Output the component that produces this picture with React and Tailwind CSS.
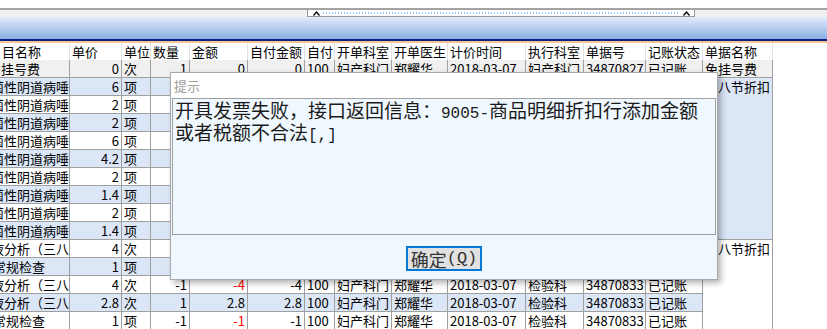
import React from "react";

const COLS = "grid-cols-[70px_52px_29px_39px_58px_57px_30px_57px_56px_78px_58px_62px_57px_70px]";

const headers = ["目名称", "单价", "单位", "数量", "金额", "自付金额", "自付", "开单科室", "开单医生", "计价时间", "执行科室", "单据号", "记账状态", "单据名称"];

const base = { pct: "100", dept: "妇产科门", doc: "郑耀华", time: "2018-03-07", st: "已记账" };

const A = "ml-[-11px]";
const rows = [
  { ...base, name: "挂号费", off: "ml-[-1px]", price: "0", unit: "次", qty: "1", amt: "0", self: "0", exec: "妇产科门", no: "34870827" },
  { ...base, name: "菌性阴道病唾液", off: A, price: "6", unit: "项", qty: "1", amt: "6", self: "6", exec: "检验科", no: "34870833" },
  { ...base, name: "菌性阴道病唾液", off: A, price: "2", unit: "项", qty: "1", amt: "2", self: "2", exec: "检验科", no: "34870833" },
  { ...base, name: "菌性阴道病唾液", off: A, price: "2", unit: "项", qty: "1", amt: "2", self: "2", exec: "检验科", no: "34870833" },
  { ...base, name: "菌性阴道病唾液", off: A, price: "6", unit: "项", qty: "1", amt: "6", self: "6", exec: "检验科", no: "34870833" },
  { ...base, name: "菌性阴道病唾液", off: A, price: "4.2", unit: "项", qty: "1", amt: "4.2", self: "4.2", exec: "检验科", no: "34870833" },
  { ...base, name: "菌性阴道病唾液", off: A, price: "2", unit: "项", qty: "1", amt: "2", self: "2", exec: "检验科", no: "34870833" },
  { ...base, name: "菌性阴道病唾液", off: A, price: "1.4", unit: "项", qty: "1", amt: "1.4", self: "1.4", exec: "检验科", no: "34870833" },
  { ...base, name: "菌性阴道病唾液", off: A, price: "2", unit: "项", qty: "1", amt: "2", self: "2", exec: "检验科", no: "34870833" },
  { ...base, name: "菌性阴道病唾液", off: A, price: "1.4", unit: "项", qty: "1", amt: "1.4", self: "1.4", exec: "检验科", no: "34870833" },
  { ...base, name: "液分析（三八节）", off: A, price: "4", unit: "次", qty: "1", amt: "4", self: "4", exec: "检验科", no: "34870833" },
  { ...base, name: "常规检查", off: "ml-[-9px]", price: "1", unit: "项", qty: "1", amt: "1", self: "1", exec: "检验科", no: "34870833" },
  { ...base, name: "液分析（三八节）", off: A, price: "4", unit: "次", qty: "-1", amt: "-4", self: "-4", exec: "检验科", no: "34870833", neg: true },
  { ...base, name: "液分析（三八节）", off: A, price: "2.8", unit: "次", qty: "1", amt: "2.8", self: "2.8", exec: "检验科", no: "34870833" },
  { ...base, name: "常规检查", off: "ml-[-9px]", price: "1", unit: "项", qty: "-1", amt: "-1", self: "-1", exec: "检验科", no: "34870833", neg: true },
];

const cell = "h-[18px] border-r border-b border-[#a0a0a0] px-[2px] leading-[17px] overflow-hidden whitespace-nowrap";

function Row({ r, i }) {
  const bg = i === 0 ? "bg-[#f0f0f0]" : i % 2 === 1 ? "bg-[#dbe6f7]" : "bg-white";
  const c = `${cell} ${bg}`;
  return (
    <>
      <div className={c}><span className={`inline-block ${r.off}`}>{r.name}</span></div>
      <div className={`${c} text-right`}>{r.price}</div>
      <div className={c}>{r.unit}</div>
      <div className={`${c} text-right`}>{r.qty}</div>
      <div className={`${c} text-right ${r.neg ? "text-[#ff0000]" : ""}`}>{r.amt}</div>
      <div className={`${c} text-right`}>{r.self}</div>
      <div className={c}>{r.pct}</div>
      <div className={c}>{r.dept}</div>
      <div className={c}>{r.doc}</div>
      <div className={c}>{r.time}</div>
      <div className={c}>{r.exec}</div>
      <div className={c}>{r.no}</div>
      <div className={c}>{r.st}</div>
      {i === 0 && <div className={c}>免挂号费</div>}
      {i === 1 && (
        <div className="row-span-9 border-r border-b border-[#a0a0a0] bg-[#dbe6f7] px-[2px] leading-[17px] overflow-hidden whitespace-nowrap">三八节折扣</div>
      )}
      {i === 10 && (
        <div className="row-span-5 border-r border-[#a0a0a0] bg-white px-[2px] leading-[17px] overflow-hidden whitespace-nowrap">三八节折扣</div>
      )}
    </>
  );
}

function Caret() {
  return (
    <svg width="7" height="5" viewBox="0 0 7 5" className="shrink-0">
      <path d="M0.5 4.5 L3.5 1 L6.5 4.5" fill="none" stroke="#000" strokeWidth="1.3" />
    </svg>
  );
}

const mono = "font-['Liberation_Mono',monospace] text-[16px]";

export default function App() {
  return (
    <div className="relative w-[827px] h-[329px] overflow-hidden bg-white text-[13px] text-black font-['Noto_Sans_CJK_SC',sans-serif]">
      <div className="h-[8px] bg-white" />
      <div className="h-[2px] bg-[#a3a3a3]" />
      <div className="h-[7px] bg-[#f0f0f0] flex">
        <div className="ml-[307px] w-[388px] h-full bg-white border-l border-b border-r border-[#9a9a9a] flex items-center pl-[5px] pr-[4px] gap-[3px]">
          <Caret />
          <svg className="flex-1" height="2" preserveAspectRatio="none">
            <line x1="0" y1="1" x2="100%" y2="1" stroke="#1a8cff" strokeWidth="1" strokeDasharray="1 2" />
          </svg>
          <Caret />
        </div>
      </div>
      <div className="h-[22px] bg-gradient-to-b from-[#e2ecfb] to-[#8aaee2]" />
      <div className="h-[2px] bg-[#0c1f86]" />
      <div className="h-[2px] bg-[#f4c58e]" />
      <div className={`grid ${COLS} w-[773px]`}>
        {headers.map((h, k) => (
          <div key={k} className="h-[17px] border-r border-[#e2e2e2] px-[2px] leading-[17px] bg-white whitespace-nowrap overflow-hidden">
            {h}
          </div>
        ))}
        {rows.map((r, i) => (
          <Row key={i} r={r} i={i} />
        ))}
      </div>

      <div className="absolute left-[170px] top-[72px] w-[548px] h-[208px] bg-[#f0f8ff] border border-[#a8a8a8] shadow-[3px_3px_6px_rgba(0,0,0,0.3)] flex flex-col">
        <div className="h-[25px] bg-white flex items-center pl-[3px] text-[13px] text-[#a0a0a0]">提示</div>
        <div className="mx-[1px] h-[137px] border border-[#a0a0a0] bg-[#f0f8ff] px-[2px] pt-[2px] text-[19px] leading-[18px] text-[#1a1a1a]">
          <div className="whitespace-nowrap">
            开具发票失败，接口返回信息：<span className={mono}>9005-</span>商品明细折扣行添加金额
          </div>
          <div className="whitespace-nowrap">
            或者税额不合法<span className={mono}>[,]</span>
          </div>
        </div>
        <div className="flex justify-center mt-[11px]">
          <div className="w-[76px] h-[25px] border-2 border-[#0078d7] bg-[#e1e1e1] flex items-center justify-center text-[18px] leading-[20px] text-[#333]">
            确定<span className={`${mono} text-[17px]`}>(<span className="underline">Q</span>)</span>
          </div>
        </div>
      </div>
    </div>
  );
}
